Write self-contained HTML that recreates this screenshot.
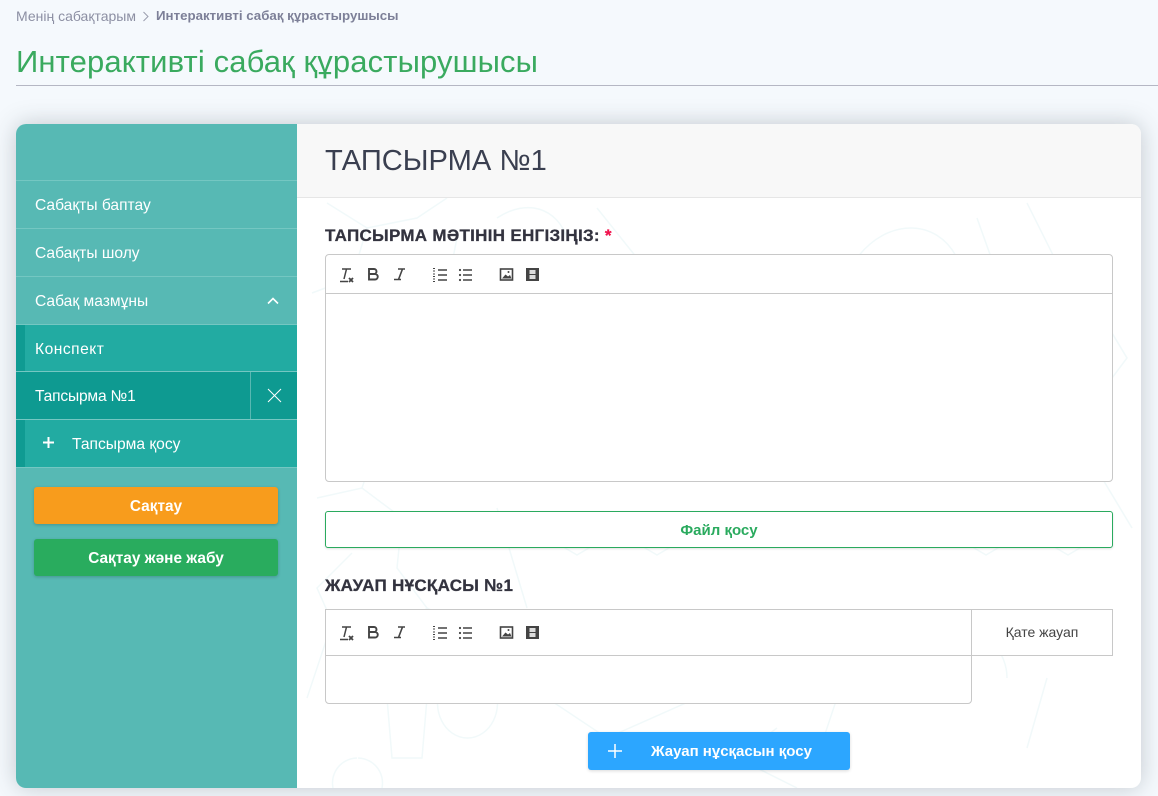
<!DOCTYPE html>
<html lang="kk">
<head>
<meta charset="utf-8">
<title>Интерактивті сабақ құрастырушысы</title>
<style>
html,body{margin:0;padding:0;width:1158px;height:796px;overflow:hidden;background:#f5f9fd;font-family:"Liberation Sans","DejaVu Sans",sans-serif;}
*{box-sizing:border-box}
.a{position:absolute;white-space:nowrap}
.card{position:absolute;left:16px;top:124px;width:1125px;height:664px;background:#fff;border-radius:10px;box-shadow:0 0 24px rgba(50,60,70,.26);overflow:hidden}
.side{position:absolute;left:0;top:0;width:281px;height:664px;background:#57b9b4}
.row{position:absolute;left:0;width:281px;height:48px;border-top:1px solid #74c7c2;color:#fff;font-size:15.6px;line-height:47px;padding-left:19px;padding-top:1px}
.sub{background:#22aba2}
.bar{position:absolute;left:0;top:0;bottom:0;width:9px;background:#0f9b92}
.btn{position:absolute;left:18px;width:244px;height:37px;border-radius:3px;color:#fff;font-size:15.4px;font-weight:bold;line-height:39px;text-align:center;box-shadow:0 1px 3px rgba(0,0,0,.2)}
.box{position:absolute;border:1px solid #c8c8c8;background:#fff}
.lab{position:absolute;font-size:17px;font-weight:bold;color:#33333f;white-space:nowrap;-webkit-text-stroke:.3px #33333f;letter-spacing:.29px}
</style>
</head>
<body>
<div class="a" style="left:16px;top:8px;font-size:14px;color:#8c8fa3;line-height:16px">Менің сабақтарым</div>
<svg class="a" style="left:141px;top:11px" width="10" height="11" viewBox="0 0 10 11"><path d="M2.5 1l4.5 4.5-4.500 4.500" fill="none" stroke="#9a9dae" stroke-width="1"/></svg>
<div class="a" style="left:156px;top:8px;font-size:13.3px;font-weight:bold;color:#7d8098;line-height:16px">Интерактивті сабақ құрастырушысы</div>
<div class="a" style="left:16px;top:44px;font-size:31px;line-height:36px;color:#3aaa5f;letter-spacing:.13px">Интерактивті сабақ құрастырушысы</div>
<div class="a" style="left:16px;top:85px;width:1142px;height:1px;background:#b5b7c4"></div>

<div class="card">
  <svg class="a" style="left:281px;top:74px" width="844" height="590" viewBox="0 0 844 590" fill="none" stroke="#f1f9fa" stroke-width="1.500">
    <path d="M30 5l40 25 50-10 30-20M70 30l-15 50 45 30 50-20 10-50M55 80l-40 15M150 90l40 20"/>
    <path d="M300 10l40 50 5 30M200 20c30-20 60-10 70 20M560 60c30-40 80-40 100 0M680 20l25 70M730 5l30 60 30-5"/>
    <path d="M20 300l45-10 40 30-5 50 30 40-40 40-50-15-20-45 35-35M65 290l10-30M130 410l40 20"/>
    <path d="M200 310l30 100"/>
    <path d="M280 317l17 10v20l-17 10-17-10v-20zM360 317l17 10v20l-17 10-17-10v-20zM297 337h46M263 337h-30M377 337h30"/>
    <path d="M689 317l17 10v20l-17 10-17-10v-20zM771 317l17 10v20l-17 10-17-10v-20zM706 337h48"/>
    <path d="M480 530l-40 30 60 30M260 430h50l10 50h-70zM60 560a25 25 0 1 0 1 0M90 500h40l-5 60h-30z"/>
    <path d="M170 470a30 35 0 1 0 1 0M250 500l60 40 90-40-60-40zM610 480a50 50 0 0 1 100 0M540 500l-20 60M750 480l-20 70M30 440l-20 60"/>
    <path d="M800 110l30 50-30 40M805 280l30 50"/>
  </svg>

  <div class="a" style="left:281px;top:0;width:844px;height:74px;background:#f8f8f8;border-bottom:1px solid #e6e6e6"></div>
  <div class="a" style="left:309px;top:19px;font-size:29.1px;line-height:36px;color:#3a3f50">ТАПСЫРМА №1</div>

  <div class="side">
    <div class="row" style="top:56px">Сабақты баптау</div>
    <div class="row" style="top:104px">Сабақты шолу</div>
    <div class="row" style="top:152px">Сабақ мазмұны
      <svg class="a" style="left:251px;top:20px" width="12" height="8" viewBox="0 0 12 8"><path d="M1 6.500l5-5 5 5" fill="none" stroke="#fff" stroke-width="1.600"/></svg>
    </div>
    <div class="row sub" style="top:200px;letter-spacing:.5px"><span class="bar"></span>Конспект</div>
    <div class="row" style="top:247px;background:#0e9a91;line-height:48px;letter-spacing:-.2px">Тапсырма №1
      <span class="a" style="left:234px;top:0;width:1px;height:47px;background:#58b8b2"></span>
      <svg class="a" style="left:251px;top:16px" width="15" height="15" viewBox="0 0 15 15"><path d="M1 1l13 13M14 1L1 14" stroke="#fff" stroke-width="1" fill="none"/></svg>
    </div>
    <div class="row sub" style="top:295px;height:49px;border-bottom:1px solid #74c7c2;line-height:47px;padding-left:56px"><span class="bar"></span>
      <svg class="a" style="left:27px;top:17px" width="11" height="11" viewBox="0 0 11 11"><path d="M5.500 0v11M0 5.500h11" stroke="#fff" stroke-width="2"/></svg>
      Тапсырма қосу</div>
    <div class="btn" style="top:363px;background:#f89c1c">Сақтау</div>
    <div class="btn" style="top:415px;background:#29ac5e">Сақтау және жабу</div>
  </div>

  <div class="lab" style="left:309px;top:103px;line-height:18px">ТАПСЫРМА МӘТІНІН ЕНГІЗІҢІЗ: <span style="color:#f0134d;-webkit-text-stroke:.3px #f0134d">*</span></div>

  <div class="box" style="left:309px;top:130px;width:788px;height:228px;border-radius:4px"></div>
  <div class="a" style="left:310px;top:169px;width:786px;height:1px;background:#c8c8c8"></div>

  <svg class="a" style="left:322px;top:142px" width="140" height="18" viewBox="0 0 140 18">
    <g fill="none" stroke="#444" stroke-width="1.500">
      <path d="M4 3h9M8.500 3L6 13M2 15.500h8"/><path d="M11 12l4 4M15 12l-4 4" stroke-width="1.800"/>
      <path d="M31 3h5a2.500 2.500 0 0 1 0 5H31zM31 8h6a2.700 2.700 0 0 1 0 5.500H31zM31 3v10.500" stroke-width="1.900"/>
      <path d="M60 3h7M56 13.500h7M64.500 3l-4 10.500" stroke-width="1.600"/>
      <path d="M100 4h9M100 9h9M100 14h9M125 4h9M125 9h9M125 14h9" stroke-width="1.400"/>
      <path d="M95 2.500h2M95 5h2M95 8h2M95 10.500h2M95 13h2M95 15.500h2" stroke-width="1"/>
    </g>
    <g fill="#444"><circle cx="122" cy="4" r="1.100"/><circle cx="122" cy="9" r="1.100"/><circle cx="122" cy="14" r="1.100"/></g>
  </svg>
  <svg class="a" style="left:483px;top:143px" width="48" height="15" viewBox="0 0 48 15">
    <rect x="1.500" y="2" width="12" height="11" fill="none" stroke="#444" stroke-width="1.600"/>
    <path d="M3 11.500l3.500-4 2.500 2 2-1.500 1.500 3.500z" fill="#444"/><circle cx="9.500" cy="5" r="1" fill="#444"/>
    <rect x="27" y="1" width="13" height="13" fill="#444"/>
    <rect x="30.500" y="3" width="6" height="4" fill="#ddd"/><rect x="30.500" y="8" width="6" height="4" fill="#ddd"/>
  </svg>

  <div class="box" style="left:309px;top:387px;width:788px;height:37px;border:1px solid #2aaa5e;border-radius:3px;box-shadow:0 1px 2px rgba(0,0,0,.12);color:#2aaa5e;font-size:15px;font-weight:bold;text-align:center;line-height:37px">Файл қосу</div>

  <div class="lab" style="left:309px;top:453px;line-height:18px">ЖАУАП НҰСҚАСЫ №1</div>

  <div class="box" style="left:309px;top:485px;width:647px;height:95px;border-radius:0 0 4px 4px"></div>
  <div class="a" style="left:310px;top:531px;width:645px;height:1px;background:#c8c8c8"></div>
  <div class="box" style="left:955px;top:485px;width:142px;height:47px;font-size:14px;text-align:center;line-height:45px;color:#444">Қате жауап</div>

  <svg class="a" style="left:322px;top:500px" width="140" height="18" viewBox="0 0 140 18">
    <g fill="none" stroke="#444" stroke-width="1.500">
      <path d="M4 3h9M8.500 3L6 13M2 15.500h8"/><path d="M11 12l4 4M15 12l-4 4" stroke-width="1.800"/>
      <path d="M31 3h5a2.500 2.500 0 0 1 0 5H31zM31 8h6a2.700 2.700 0 0 1 0 5.500H31zM31 3v10.500" stroke-width="1.900"/>
      <path d="M60 3h7M56 13.500h7M64.500 3l-4 10.500" stroke-width="1.600"/>
      <path d="M100 4h9M100 9h9M100 14h9M125 4h9M125 9h9M125 14h9" stroke-width="1.400"/>
      <path d="M95 2.500h2M95 5h2M95 8h2M95 10.500h2M95 13h2M95 15.500h2" stroke-width="1"/>
    </g>
    <g fill="#444"><circle cx="122" cy="4" r="1.100"/><circle cx="122" cy="9" r="1.100"/><circle cx="122" cy="14" r="1.100"/></g>
  </svg>
  <svg class="a" style="left:483px;top:501px" width="48" height="15" viewBox="0 0 48 15">
    <rect x="1.500" y="2" width="12" height="11" fill="none" stroke="#444" stroke-width="1.600"/>
    <path d="M3 11.500l3.500-4 2.500 2 2-1.500 1.500 3.500z" fill="#444"/><circle cx="9.500" cy="5" r="1" fill="#444"/>
    <rect x="27" y="1" width="13" height="13" fill="#444"/>
    <rect x="30.500" y="3" width="6" height="4" fill="#ddd"/><rect x="30.500" y="8" width="6" height="4" fill="#ddd"/>
  </svg>

  <div class="a" style="left:572px;top:608px;width:262px;height:38px;background:#2ca6ff;border-radius:3px;box-shadow:0 1px 3px rgba(0,0,0,.15);color:#fff;font-size:15px;font-weight:bold;line-height:39px;padding-left:63px">Жауап нұсқасын қосу
    <svg class="a" style="left:20px;top:12px" width="14" height="14" viewBox="0 0 14 14"><path d="M7 0v14M0 7h14" stroke="#fff" stroke-width="1.500"/></svg>
  </div>
</div>
</body>
</html>
